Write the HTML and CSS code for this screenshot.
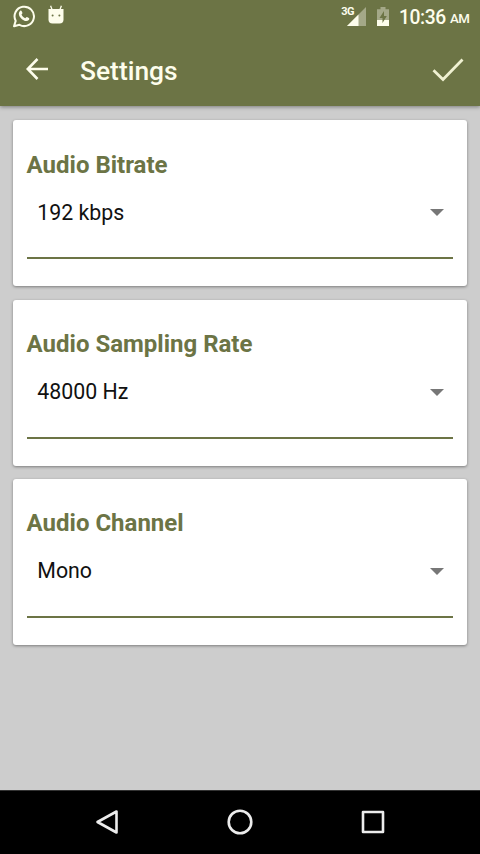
FILE: index.html
```html
<!DOCTYPE html>
<html lang="en">
<head>
<meta charset="utf-8">
<title>Settings</title>
<link rel="stylesheet" href="styles.css">
</head>
<body>
<div class="screen">
  <header class="header">
    <div class="status">
      <svg class="whatsapp" width="24" height="24" viewBox="0 0 24 24" fill="none">
        <path d="M2 22.3 3.7 16.9A9.7 9.7 0 1 1 7.5 20.8Z" stroke="currentColor" stroke-width="2" stroke-linejoin="round"/>
        <path d="M8.2 6.7c.7-.4 1.2-.2 1.5.5l.7 1.6c.3.7-.7 1.3-.9 1.8.8 1.7 2 2.8 3.7 3.6.6-.2 1.1-1.5 1.8-1.2l1.9.9c.7.4.4 1.5-.1 2.1-2.3 2.3-5.7.2-7.6-1.6C7.1 12.2 5.7 9.2 8.2 6.7Z" fill="currentColor"/>
      </svg>
      <svg class="android" width="18" height="20" viewBox="0 0 18 20">
        <path d="M3.6.8 5 4.500M14.4.8 13 4.500" stroke="currentColor" stroke-width="1.300"/>
        <path d="M1.500 4h15v10.500q0 4-4 4h-7q-4 0-4-4Z" fill="currentColor"/>
        <circle cx="5.600" cy="10.500" r="1" fill="#6c7445"/><circle cx="12.400" cy="10.500" r="1" fill="#6c7445"/>
      </svg>
      <span class="network">3G</span>
      <svg class="signal" width="19" height="19" viewBox="0 0 19 19">
        <path d="M19 0V19H0Z" fill="#a4a888"/>
        <path d="M11.500 7.500V19H0Z" fill="currentColor"/>
      </svg>
      <svg class="battery" width="14" height="20" viewBox="0 0 14 20">
        <path d="M4.500 0h5v2.200H13V13H1V2.200h3.500Z" fill="#a4a888"/>
        <path d="M1 13h12v6H1Z" fill="currentColor"/>
        <path d="M8 4 3.500 11H6.500V16L10.800 9H8Z" fill="#6c7445"/>
      </svg>
      <span class="clock">10:36</span><span class="meridiem">AM</span>
    </div>
    <div class="toolbar">
      <svg class="back" width="24" height="24" viewBox="0 0 24 24" fill="none" stroke="currentColor" stroke-width="2.600"><path d="M23 12H3M12.500 2 2.800 12 12.500 22"/></svg>
      <h1 class="title">Settings</h1>
      <svg class="confirm" width="32" height="25" viewBox="0 0 32 25" fill="none" stroke="#f0f1d2" stroke-width="2.800"><path d="M1.500 13.200 11 22.500 30.500 2.500"/></svg>
    </div>
  </header>
  <main class="settings">
    <section class="card">
      <h2 class="label">Audio Bitrate</h2>
      <div class="select"><span>192 kbps</span><i class="caret"></i></div>
    </section>
    <section class="card">
      <h2 class="label">Audio Sampling Rate</h2>
      <div class="select"><span>48000 Hz</span><i class="caret"></i></div>
    </section>
    <section class="card">
      <h2 class="label">Audio Channel</h2>
      <div class="select"><span>Mono</span><i class="caret"></i></div>
    </section>
  </main>
  <nav class="navbar">
    <svg width="28" height="28" viewBox="0 0 28 28"><path d="M23.500 3.500V24.500L4.500 14Z"/></svg>
    <svg width="28" height="28" viewBox="0 0 28 28"><circle cx="14" cy="14" r="11.300"/></svg>
    <svg width="28" height="28" viewBox="0 0 28 28"><path d="M4 4H24V24H4Z"/></svg>
  </nav>
</div>
</body>
</html>
```
FILE: styles.css
```css
* { box-sizing: border-box; }
body { margin: 0; font-family: Roboto, "Liberation Sans", sans-serif; }
.screen { width: 480px; height: 854px; display: flex; flex-direction: column; background: #cdcdcd; overflow: hidden; }
.header { height: 106px; background: #6c7445; color: #fdfdec; box-shadow: 0 1px 4px rgba(0,0,0,.4); }
.status { height: 32px; display: flex; align-items: center; padding: 0 10px 0 12px; }
.status svg { flex: none; }
.android { margin-left: 11px; margin-top: -2px; }
.network { margin-left: auto; margin-top: -8px; font-size: 11px; line-height: 12px; font-weight: 700; letter-spacing: -.5px; }
.signal { margin-left: -7px; margin-top: 1px; }
.battery { margin: 1px 9px 0 10px; }
.clock { width: 47px; margin: 3px 4px 0 0; font-size: 19.3px; line-height: 32px; font-weight: 500; letter-spacing: -.4px; white-space: nowrap; }
.meridiem { width: 20px; margin-top: 5px; font-size: 13.3px; line-height: 28px; font-weight: 500; letter-spacing: -.5px; }
.toolbar { height: 74px; display: flex; align-items: center; padding: 0 16px 0 25px; }
.title { margin: 4px 0 0 31px; font-size: 26.4px; line-height: 32px; font-weight: 500; }
.confirm { margin-left: auto; }
.settings { flex: 1; display: flex; flex-direction: column; gap: 13.3px; padding: 14.3px 13.3px; }
.card { height: 166px; padding: 28.4px 13.3px 27px; background: #fff; border-radius: 3px; box-shadow: 0 1px 3px rgba(0,0,0,.4); }
.label { margin: 0; font-size: 24px; line-height: 32px; font-weight: 700; color: #6c7445; }
.select { height: 78.6px; display: flex; align-items: flex-start; justify-content: space-between; padding: 16px 9px 0 10.7px; border-bottom: 2.7px solid #6c7445; font-size: 21.33px; line-height: 32px; color: #111; }
.caret { margin-top: 12.6px; border: 7px solid transparent; border-top-color: #777; border-bottom: 0; }
.navbar { height: 64px; display: flex; align-items: center; justify-content: center; gap: 105.3px; padding-bottom: 2px; background: #000; border-top: 1px solid #333; }
.navbar svg { fill: none; stroke: #ececec; stroke-width: 2.6; stroke-linejoin: round; }
```
